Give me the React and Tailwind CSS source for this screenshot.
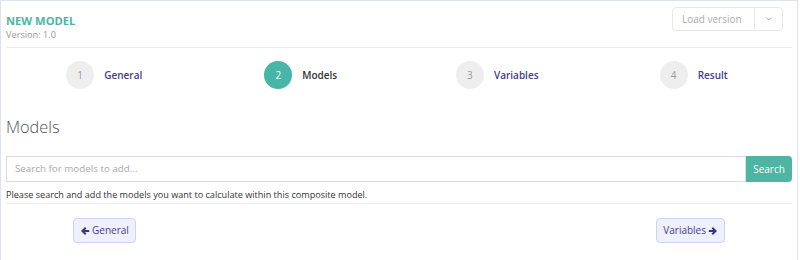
import React from 'react';
import { ChevronDown } from 'lucide-react';

const steps = [
  { n: 1, label: 'General' },
  { n: 2, label: 'Models', active: true },
  { n: 3, label: 'Variables' },
  { n: 4, label: 'Result' },
];

const ArrowLeft = () => (
  <svg width="10" height="10" viewBox="0 0 10 10" className="inline-block">
    <path d="M5 1 L1 5 L5 9 L6.5 7.6 L4.8 6.1 H9.2 V3.9 H4.8 L6.5 2.4 Z" fill="#3d3480" />
  </svg>
);

const ArrowRight = () => (
  <svg width="10" height="10" viewBox="0 0 10 10" className="inline-block">
    <path d="M5 1 L9 5 L5 9 L3.5 7.6 L5.2 6.1 H0.8 V3.9 H5.2 L3.5 2.4 Z" fill="#3d3480" />
  </svg>
);

const App = () => {
  return (
    <div className="w-[800px] h-[260px] bg-white overflow-hidden font-['Open_Sans',sans-serif]">
      <div className="w-[798px] h-[260px] border-l border-t border-r border-[#dfe3ee] px-[5px]">
        <div className="h-[47px] flex justify-between border-b border-[#ececec]">
          <div className="pt-[12px]">
            <p className="text-[11.2px] leading-[15px] font-bold text-[#4db5a2]">NEW MODEL</p>
            <p className="text-[9.2px] leading-[13px] text-[#999]">Version: 1.0</p>
          </div>
          <div className="mt-[6px] mr-[9px] w-[111px] h-[24px] border border-[#e8e8e8] rounded flex">
            <span className="flex-1 whitespace-nowrap text-[10px] leading-[22px] text-[#aaa] px-[9px]">Load version</span>
            <span className="w-[28px] border-l border-[#e8e8e8] flex items-center justify-center"><ChevronDown size={10} color="#999" /></span>
          </div>
        </div>
        <div className="grid grid-cols-4 py-[13px]">
          {steps.map((s) => (
            <div key={s.n} className="flex items-center justify-center">
              <div className={`w-[28px] h-[28px] rounded-full flex items-center justify-center text-[10px] ${s.active ? 'bg-[#47b5a7] text-white' : 'bg-[#eeeeee] text-[#999]'}`}>{s.n}</div>
              <span className={`ml-[10px] text-[10px] font-semibold ${s.active ? 'text-[#333]' : 'text-[#463c8c]'}`}>{s.label}</span>
            </div>
          ))}
        </div>
        <h2 className="mt-[13px] text-[16.3px] leading-[24px] font-light text-[#555]">Models</h2>
        <div className="mt-[17px] flex h-[26px]">
          <div className="flex-1 border border-[#dddddd] text-[9.8px] leading-[24px] text-[#aaa] px-[8px]">Search for models to add...</div>
          <button className="w-[46px] bg-[#4db5a2] text-white text-[10px] rounded-r">Search</button>
        </div>
        <p className="mt-[6px] text-[9.1px] leading-[14px] text-[#333] border-b border-[#ececec] pb-[1px]">Please search and add the models you want to calculate within this composite model.</p>
        <div className="mt-[14px] flex justify-between px-[67px]">
          <button className="h-[25px] px-[6px] bg-[#eef0fb] border border-[#cfd2f2] rounded text-[10px] text-[#463c8c] flex items-center gap-[2px]"><ArrowLeft />General</button>
          <button className="h-[25px] px-[6px] bg-[#eef0fb] border border-[#cfd2f2] rounded text-[10px] text-[#463c8c] flex items-center gap-[2px]">Variables<ArrowRight /></button>
        </div>
      </div>
    </div>
  );
};

export default App;
